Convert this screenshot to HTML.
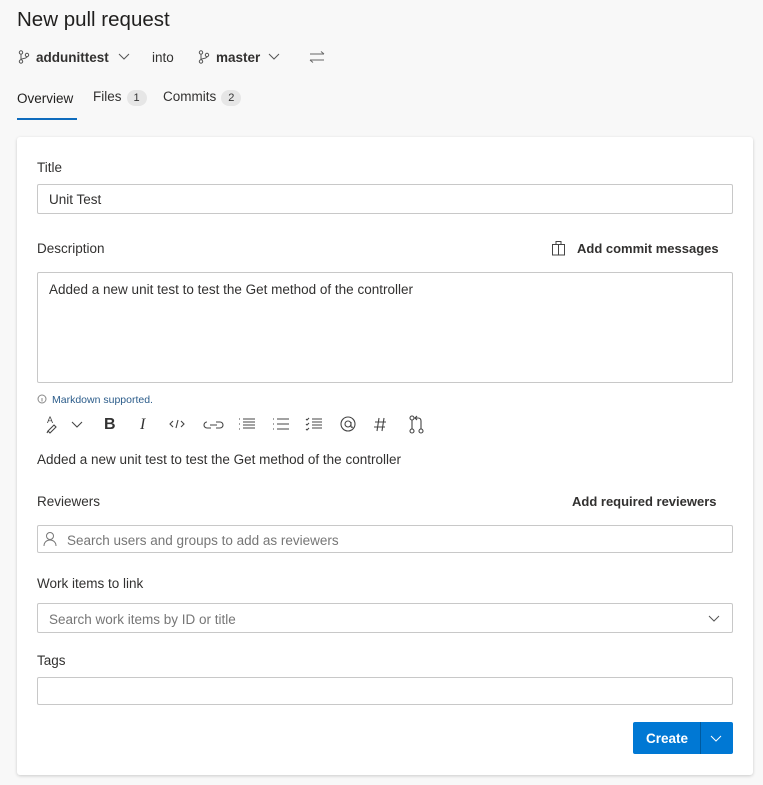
<!DOCTYPE html>
<html><head><meta charset="utf-8"><style>
*{box-sizing:border-box;margin:0;padding:0}
body{width:763px;height:785px;background:#f8f8f8;font-family:"Liberation Sans",sans-serif;color:#323130;position:relative;overflow:hidden;font-size:13.5px}
.a{position:absolute;white-space:nowrap}
.inp{position:absolute;left:37px;width:696px;border:1px solid #c8c8c8;border-radius:2px;background:#fff}
.ph{color:#767676}
.badge{display:inline-block;background:#e6e6e6;border-radius:10px;padding:2px 7px;font-size:11px;margin-left:5px;color:#333}
svg{position:absolute}
</style></head><body>
<div class="a" style="left:17px;top:8px;font-size:20.5px;color:#201f1e">New pull request</div>
<svg style="left:18px;top:50px" width="12" height="14" viewBox="0 0 12 14" fill="none" stroke="#555" stroke-width="1"><circle cx="3" cy="2.5" r="1.7"/><circle cx="3" cy="11.5" r="1.7"/><circle cx="9" cy="5" r="1.7"/><path d="M3 4.2v5.6M9 6.7c0 2-6 1.5-6 3"/></svg>
<div class="a" style="left:36px;top:50px;font-weight:bold">addunittest</div>
<svg style="left:118px;top:53px" width="12" height="8"><path d="M1 1l5 5 5-5" fill="none" stroke="#555"/></svg>
<div class="a" style="left:152px;top:50px">into</div>
<svg style="left:198px;top:50px" width="12" height="14" viewBox="0 0 12 14" fill="none" stroke="#555" stroke-width="1"><circle cx="3" cy="2.5" r="1.7"/><circle cx="3" cy="11.5" r="1.7"/><circle cx="9" cy="5" r="1.7"/><path d="M3 4.2v5.6M9 6.7c0 2-6 1.5-6 3"/></svg>
<div class="a" style="left:216px;top:50px;font-weight:bold">master</div>
<svg style="left:268px;top:53px" width="12" height="8"><path d="M1 1l5 5 5-5" fill="none" stroke="#555"/></svg>
<svg style="left:309px;top:51px" width="16" height="12"><path d="M1 3h14M12 0.5l3 2.5M15 9H1M4 11.5L1 9" fill="none" stroke="#666"/></svg>
<div class="a" style="left:17px;top:91px;color:#201f1e">Overview</div>
<div style="position:absolute;left:17px;top:118px;width:60px;height:2px;background:#0f6cbd"></div>
<div class="a" style="left:93px;top:89px">Files<span class="badge">1</span></div>
<div class="a" style="left:163px;top:89px">Commits<span class="badge">2</span></div>

<div style="position:absolute;left:17px;top:137px;width:736px;height:638px;background:#fff;border-radius:3px;box-shadow:0 1px 3px rgba(0,0,0,.18)"></div>
<div class="a" style="left:37px;top:160px">Title</div>
<div class="inp" style="top:184px;height:30px"><span class="a" style="left:11px;top:7px">Unit Test</span></div>
<div class="a" style="left:37px;top:241px">Description</div>
<svg style="left:551px;top:240px" width="15" height="16" fill="none" stroke="#444"><rect x="1.5" y="4.5" width="12" height="10.5"/><rect x="5" y="1.5" width="5" height="3"/><path d="M7.5 4.5v10.5"/></svg>
<div class="a" style="left:577px;top:241px;font-weight:bold;font-size:13px">Add commit messages</div>
<div class="inp" style="top:272px;height:111px"><span class="a" style="left:11px;top:9px">Added a new unit test to test the Get method of the controller</span></div>
<svg style="left:37px;top:394px" width="10" height="10"><circle cx="5" cy="5" r="4" fill="none" stroke="#888"/><path d="M5 4v3.5" stroke="#888"/></svg>
<div class="a" style="left:52px;top:394px;font-size:10.5px;color:#2b5c8a">Markdown supported.</div>
<svg style="left:40px;top:413px" width="400" height="22" fill="none" stroke="#444" stroke-width="1.1">
<text x="7" y="10" font-size="9" fill="#444" stroke="none" font-family="Liberation Sans">A</text>
<path d="M8 18l6-6 2 2-6 6zM8 18l-1 2"/>
<path d="M32 9l5 5 5-5"/>
<text x="64" y="16" font-size="16" font-weight="bold" fill="#333" stroke="none" font-family="Liberation Sans">B</text>
<text x="100" y="16" font-size="16" font-style="italic" fill="#333" stroke="none" font-family="Liberation Serif">I</text>
<path d="M133 8l-3 3 3 3M141 8l3 3-3 3M138 7l-2 8"/>
<path d="M167 9a3 3 0 0 0 0 6h4M176 9h4a3 3 0 0 1 0 6h-4M170 12h7"/>
<path d="M199 6h1M199 11h1M199 16h1M203 6h12M203 9h12M203 12h12M203 15h12"/>
<path d="M233 6h1M233 11h1M233 16h1M237 6h12M237 11h12M237 16h12"/>
<path d="M266 6l1 1 2-2M266 11l1 1 2-2M266 16l1 1 2-2M272 6h10M272 9h10M272 12h10M272 15h10"/>
<circle cx="308" cy="11" r="7"/><circle cx="308" cy="11" r="3"/><path d="M311 9v4q0 2 2 1"/>
<path d="M339 5l-2 13M344 5l-2 13M335 9h11M334 14h11"/>
<circle cx="372" cy="5" r="2"/><circle cx="372" cy="18" r="2"/><circle cx="381" cy="18" r="2"/><path d="M372 7v9M381 16v-8q0-3-3-3h-3M377 3l-2 2 2 2"/>
</svg>
<div class="a" style="left:37px;top:452px">Added a new unit test to test the Get method of the controller</div>
<div class="a" style="left:37px;top:494px">Reviewers</div>
<div class="a" style="left:572px;top:494px;font-weight:bold;font-size:13px">Add required reviewers</div>
<div class="inp" style="top:525px;height:28px">
<svg style="left:5px;top:5px" width="14" height="16" fill="none" stroke="#777"><circle cx="7" cy="5" r="3.5"/><path d="M1 15c0-4 3-6 6-6s6 2 6 6"/></svg>
<span class="a ph" style="left:29px;top:7px">Search users and groups to add as reviewers</span></div>
<div class="a" style="left:37px;top:576px">Work items to link</div>
<div class="inp" style="top:603px;height:30px"><span class="a ph" style="left:11px;top:8px">Search work items by ID or title</span>
<svg style="left:670px;top:11px" width="12" height="8"><path d="M1 1l5 5 5-5" fill="none" stroke="#555"/></svg></div>
<div class="a" style="left:37px;top:653px">Tags</div>
<div class="inp" style="top:677px;height:28px"></div>
<div style="position:absolute;left:633px;top:722px;width:100px;height:32px;background:#0078d4;border-radius:2px"></div>
<div style="position:absolute;left:700px;top:722px;width:1px;height:32px;background:#005a9e"></div>
<div class="a" style="left:646px;top:731px;color:#fff;font-weight:bold">Create</div>
<svg style="left:710px;top:735px" width="12" height="8"><path d="M1 1l5 5 5-5" fill="none" stroke="#fff"/></svg>
</body></html>
